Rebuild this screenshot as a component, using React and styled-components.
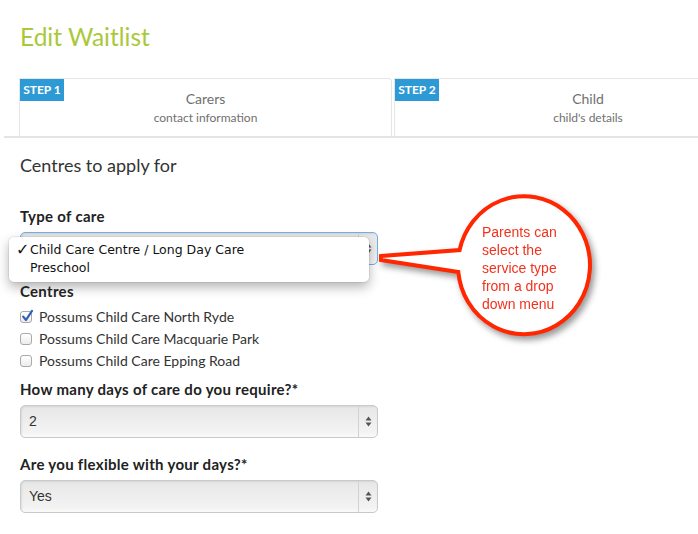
import React from "react";
import styled, { createGlobalStyle } from "styled-components";

const GlobalStyle = createGlobalStyle`
  html, body {
    margin: 0;
    padding: 0;
    background: #fff;
    overflow: hidden;
  }
  body {
    font-family: Lato, "Open Sans", sans-serif;
    color: #333;
  }
  * {
    box-sizing: border-box;
  }
`;

const Page = styled.div`
  position: relative;
  width: 698px;
  height: 534px;
  padding-top: 21px;
`;

const Title = styled.h1`
  margin: 0 0 25px 20px;
  font-size: 24.5px;
  line-height: 32px;
  font-weight: 400;
  color: #a9c93a;
`;

/* 상단 단계 탭 */
const StepsBar = styled.div`
  display: flex;
  gap: 2px;
  margin-left: 4px;
  padding-left: 15px;
  border-bottom: 2px solid #e4e4e4;
  overflow: hidden;
`;

const Step = styled.div`
  position: relative;
  flex: 0 0 ${(p) => p.$width}px;
  height: 58px;
  padding-top: 11px;
  border: 1px solid #e6e6e6;
  border-bottom: none;
  border-radius: 0 4px 0 0;
  text-align: center;
  color: #707070;
`;

const StepBadge = styled.span`
  position: absolute;
  top: 0;
  left: 0;
  width: 44px;
  height: 22px;
  background: #2d9ad6;
  color: #fff;
  font-size: 12px;
  font-weight: 700;
  line-height: 22px;
  text-align: center;
`;

const StepTitle = styled.div`
  font-size: 14px;
  line-height: 17px;
`;

const StepSub = styled.div`
  margin-top: 3px;
  font-size: 12px;
  line-height: 16px;
`;

const Form = styled.div`
  width: 358px;
  margin-left: 20px;
  padding-top: 16px;
`;

const SectionTitle = styled.h2`
  margin: 0 0 30px;
  font-size: 18px;
  line-height: 22px;
  font-weight: 400;
  color: #333;
`;

const Field = styled.div`
  position: relative;
  margin-bottom: ${(p) => p.$gap ?? 16}px;
`;

const Label = styled.div`
  margin-bottom: ${(p) => p.$gap ?? 6}px;
  font-size: 15px;
  line-height: 20px;
  font-weight: 700;
  letter-spacing: 0.3px;
  color: #222;
`;

const SelectBox = styled.div`
  display: flex;
  height: 33px;
  border: 1px solid ${(p) => (p.$focus ? "#76aee6" : "#c9c9c9")};
  border-radius: 5px;
  background: linear-gradient(#e7e7e7, #f3f3f3 85%, #fafafa);
  box-shadow: inset 1px 1px 2px rgba(0, 0, 0, 0.08);
  font-family: "Liberation Sans", Arial, sans-serif;
  font-size: 14px;
  color: #333;
`;

const SelectValue = styled.div`
  flex: 1;
  padding-left: 8px;
  line-height: 31px;
  white-space: nowrap;
  overflow: hidden;
`;

const ArrowCell = styled.div`
  width: 19px;
  border-left: 1px solid #d2d2d2;
  display: flex;
  align-items: center;
  justify-content: center;
`;

const Menu = styled.div`
  position: absolute;
  left: -11px;
  top: 31px;
  width: 360px;
  padding: 4px 0 5px;
  background: #fff;
  border-radius: 5px;
  box-shadow: 0 5px 12px rgba(0, 0, 0, 0.3), 0 0 0 1px rgba(0, 0, 0, 0.06);
  font-family: "DejaVu Sans", Verdana, sans-serif;
  font-size: 12.5px;
  color: #111;
`;

const MenuItem = styled.div`
  display: flex;
  line-height: 18px;
  padding-left: 7px;
`;

const CheckCol = styled.span`
  width: 14px;
  flex: 0 0 14px;
  font-size: 16px;
  font-weight: 700;
`;

const CheckList = styled.div`
  display: flex;
  flex-direction: column;
`;

const CheckRow = styled.label`
  display: flex;
  align-items: center;
  gap: 7px;
  height: 22px;
  font-size: 14px;
  color: #333;
`;

const Box = styled.span`
  position: relative;
  width: 12px;
  height: 12px;
  margin-top: 1px;
  border: 1px solid #a9a9a9;
  border-radius: 3px;
  background: linear-gradient(#fff, #ececec);
  svg {
    position: absolute;
    left: 0;
    top: -3px;
  }
`;

const Callout = styled.svg`
  position: absolute;
  left: 0;
  top: 0;
  filter: drop-shadow(3px 4px 3px rgba(0, 0, 0, 0.4));
  pointer-events: none;
`;

const CalloutText = styled.text`
  font-family: "Liberation Sans", Arial, sans-serif;
  font-size: 14px;
  fill: #f2321c;
`;

function Arrows() {
  return (
    <svg width="7" height="11" viewBox="0 0 7 11">
      <path d="M3.5 0.5 L6.5 4.5 L0.5 4.5 Z" fill="#555" />
      <path d="M3.5 10.5 L6.5 6.5 L0.5 6.5 Z" fill="#555" />
    </svg>
  );
}

function Select({ value, focus }) {
  return (
    <SelectBox $focus={focus}>
      <SelectValue>{value}</SelectValue>
      <ArrowCell>
        <Arrows />
      </ArrowCell>
    </SelectBox>
  );
}

function Checkbox({ checked, children }) {
  return (
    <CheckRow>
      <Box>
        {checked && (
          <svg width="13" height="14" viewBox="0 0 13 14">
            <path
              d="M2.2 7.6 L5 11 L11 1.8"
              fill="none"
              stroke="#2f5fb3"
              strokeWidth="2.2"
              strokeLinecap="round"
              strokeLinejoin="round"
            />
          </svg>
        )}
      </Box>
      {children}
    </CheckRow>
  );
}

const CENTRES = [
  { name: "Possums Child Care North Ryde", checked: true },
  { name: "Possums Child Care Macquarie Park", checked: false },
  { name: "Possums Child Care Epping Road", checked: false },
];

const CARE_TYPES = [
  { name: "Child Care Centre / Long Day Care", selected: true },
  { name: "Preschool", selected: false },
];

const LINES = ["Parents can", "select the", "service type", "from a drop", "down menu"];

export default function App() {
  return (
    <>
      <GlobalStyle />
      <Page>
        <Title>Edit Waitlist</Title>
        <StepsBar>
          <Step $width={373}>
            <StepBadge>STEP 1</StepBadge>
            <StepTitle>Carers</StepTitle>
            <StepSub>contact information</StepSub>
          </Step>
          <Step $width={388}>
            <StepBadge>STEP 2</StepBadge>
            <StepTitle>Child</StepTitle>
            <StepSub>child's details</StepSub>
          </Step>
        </StepsBar>

        <Form>
          <SectionTitle>Centres to apply for</SectionTitle>

          <Field>
            <Label>Type of care</Label>
            {/* 열린 드롭다운이 값을 가림 */}
            <Select value="" focus />
            <Menu>
              {CARE_TYPES.map((t) => (
                <MenuItem key={t.name}>
                  <CheckCol>{t.selected ? "✓" : ""}</CheckCol>
                  {t.name}
                </MenuItem>
              ))}
            </Menu>
          </Field>

          <Field $gap={8}>
            <Label $gap={4}>Centres</Label>
            <CheckList>
              {CENTRES.map((c) => (
                <Checkbox key={c.name} checked={c.checked}>
                  {c.name}
                </Checkbox>
              ))}
            </CheckList>
          </Field>

          <Field>
            <Label>How many days of care do you require?*</Label>
            <Select value="2" />
          </Field>

          <Field>
            <Label>Are you flexible with your days?*</Label>
            <Select value="Yes" />
          </Field>
        </Form>

        {/* 말풍선 안내 */}
        <Callout width="698" height="534" viewBox="0 0 698 534">
          <path
            d="M381 256 L459.6 250 A66 69 0 1 1 458.3 272 L381 260 Z"
            fill="#fff"
            stroke="#ff2600"
            strokeWidth="4"
            strokeLinejoin="miter"
          />
          {LINES.map((line, i) => (
            <CalloutText key={line} x="482" y={237 + i * 18}>
              {line}
            </CalloutText>
          ))}
        </Callout>
      </Page>
    </>
  );
}
